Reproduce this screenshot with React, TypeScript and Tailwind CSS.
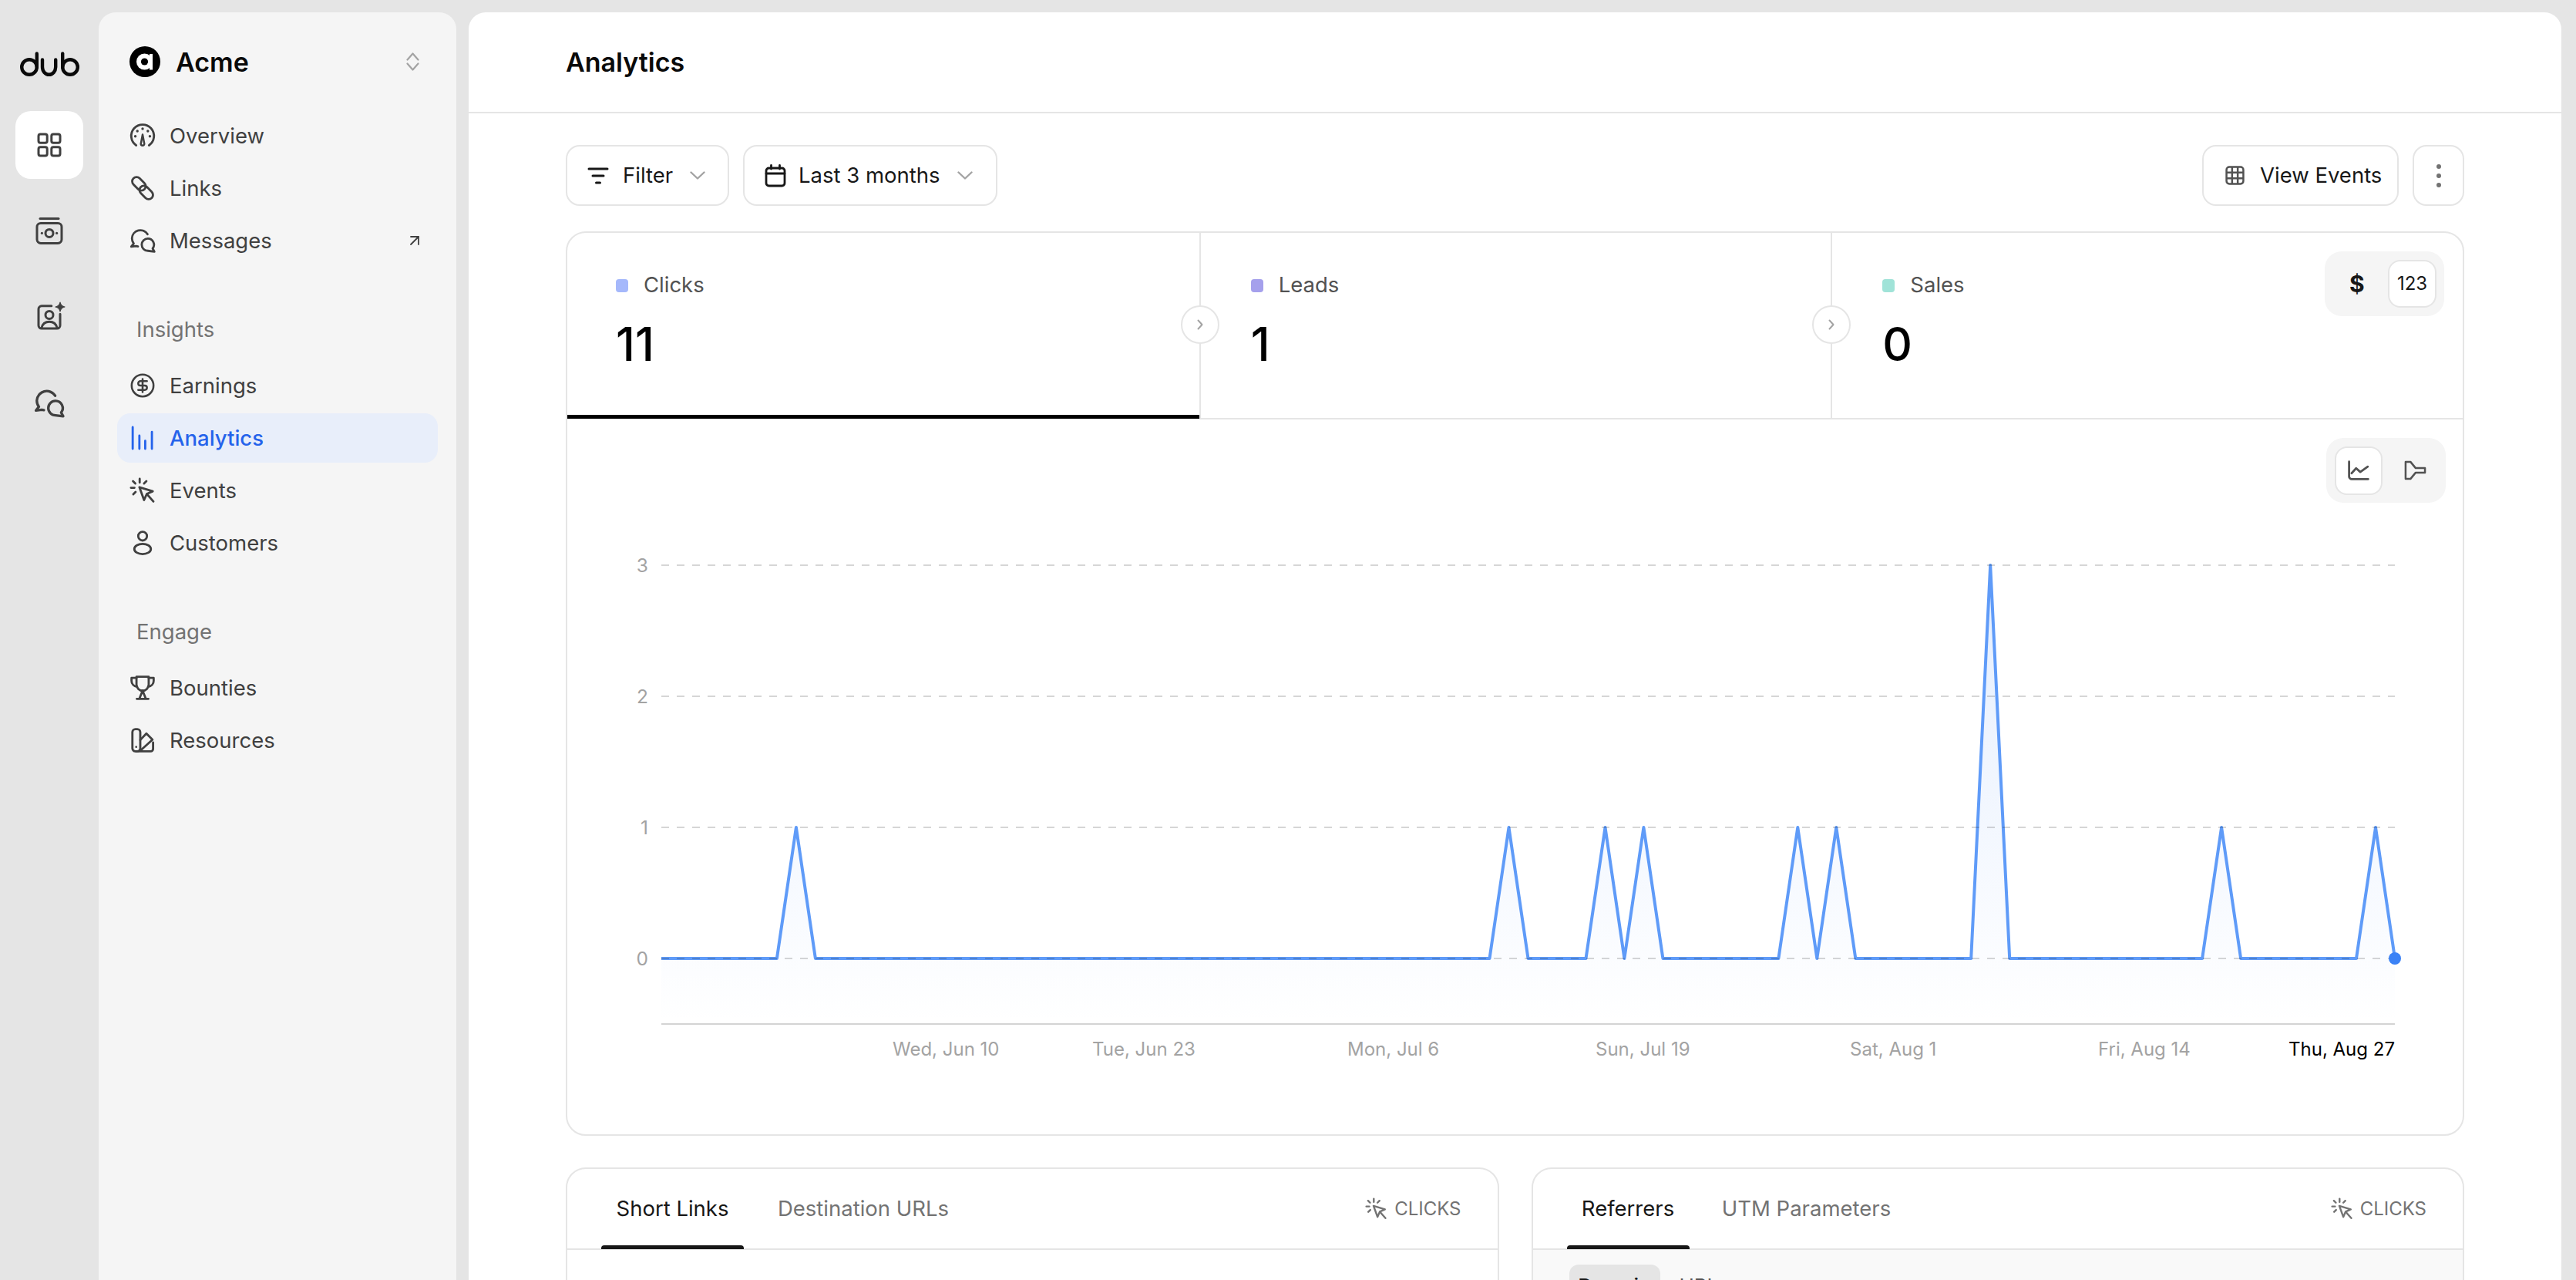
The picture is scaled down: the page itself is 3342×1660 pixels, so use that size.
import React from 'react';
import { ArrowUpRight, CircleDollarSign } from 'lucide-react';

type IconProps = { className?: string };

const NucleoSvg: React.FC<React.PropsWithChildren<{ className?: string }>> = ({ className = 'w-[34px] h-[34px]', children }) => (
  <svg viewBox="0 0 18 18" fill="none" stroke="currentColor" strokeWidth="1.5" strokeLinecap="round" strokeLinejoin="round" className={`shrink-0 overflow-visible ${className}`}>
    {children}
  </svg>
);

const GaugeIcon = ({ className }: IconProps) => (
  <NucleoSvg className={className}>
    <path d="M4.6 15.6A7.8 7.8 0 1 1 13.4 15.6" />
    <path d="M9 8.2 10.2 14.6a1.2 1.2 0 1 1-2.4 0Z" strokeWidth="1.3" />
    <g fill="currentColor" stroke="none">
      <circle cx="4" cy="9.4" r=".9" />
      <circle cx="5.4" cy="5.8" r=".9" />
      <circle cx="9" cy="4.2" r=".9" />
      <circle cx="12.6" cy="5.8" r=".9" />
      <circle cx="14" cy="9.4" r=".9" />
    </g>
  </NucleoSvg>
);

const LinkIcon = ({ className }: IconProps) => (
  <NucleoSvg className={className}>
    <rect x="1.2" y="3" width="10.6" height="6" rx="3" transform="rotate(45 6.5 6)" />
    <rect x="6.2" y="9" width="10.6" height="6" rx="3" transform="rotate(45 11.5 12)" />
  </NucleoSvg>
);

const ChatIcon = ({ className }: IconProps) => (
  <NucleoSvg className={className}>
    <path d="M12.4 4.6A5.8 5.8 0 0 0 1.7 7.4c0 1.4.4 2.6 1.2 3.6L1.2 13.2l3.4-.4 1.2.2" />
    <path d="M12.6 7.6a4.2 4.2 0 1 0 0 8.4l4.5.6-1.2-2.2a4.2 4.2 0 0 0-3.3-6.8Z" />
  </NucleoSvg>
);

const BarsIcon = ({ className }: IconProps) => (
  <NucleoSvg className={className}>
    <path d="M2.2 1.6V16.4M6.8 7.4V16.4M10.8 11V16.4M15.4 4.8V16.4" />
  </NucleoSvg>
);

const CursorIcon = ({ className }: IconProps) => (
  <NucleoSvg className={className}>
    <path d="M7 1V3.6M11.6 2.6 10 4.2M2.4 2.6 4 4.2M1 7.2H3.4M2.6 11.6 4.2 10" />
    <path d="M6.8 6.8 16 9.6 11.9 11.4 10 15.6Z" />
    <path d="M12 11.6 16.4 16.6" />
  </NucleoSvg>
);

const PersonIcon = ({ className }: IconProps) => (
  <NucleoSvg className={className}>
    <circle cx="9" cy="4.4" r="3" />
    <ellipse cx="9" cy="13.2" rx="5.7" ry="3.5" />
  </NucleoSvg>
);

const TrophyIcon = ({ className }: IconProps) => (
  <NucleoSvg className={className}>
    <path d="M4.8 1.4H13.2V6.8a4.2 4.2 0 0 1-8.4 0Z" />
    <path d="M4.8 2.2H1.4V4.2C1.4 6.4 3 8 5.2 8.2M13.2 2.2H16.6V4.2C16.6 6.4 15 8 12.8 8.2" />
    <path d="M9 11 6.8 16.4M9 11 11.2 16.4M5 16.6H13" />
  </NucleoSvg>
);

const SwatchIcon = ({ className }: IconProps) => (
  <NucleoSvg className={className}>
    <rect x="2" y="1.4" width="5.4" height="15.2" rx="2" />
    <path d="M7.4 8.8 11.6 4.4 15.8 8.6 8 15.6" />
    <path d="M4.4 16.6H14.6A1.6 1.6 0 0 0 16.2 15V10.6" />
    <circle cx="4.6" cy="13.6" r=".7" fill="currentColor" stroke="none" />
  </NucleoSvg>
);

const GridIcon = ({ className }: IconProps) => (
  <NucleoSvg className={className}>
    <rect x="2" y="2" width="5.6" height="5.6" rx="1.2" />
    <rect x="10.4" y="2" width="5.6" height="5.6" rx="1.2" />
    <rect x="2" y="10.4" width="5.6" height="5.6" rx="1.2" />
    <rect x="10.4" y="10.4" width="5.6" height="5.6" rx="1.2" />
  </NucleoSvg>
);

const MoneyIcon = ({ className }: IconProps) => (
  <NucleoSvg className={className}>
    <path d="M3 1.2H15" />
    <rect x="1" y="4.2" width="16" height="13" rx="2.4" />
    <circle cx="9" cy="10.7" r="2.5" />
    <circle cx="4.2" cy="10.7" r=".8" fill="currentColor" stroke="none" />
    <circle cx="13.8" cy="10.7" r=".8" fill="currentColor" stroke="none" />
  </NucleoSvg>
);

const PartnerIcon = ({ className }: IconProps) => (
  <NucleoSvg className={className}>
    <path d="M10.4 2.4H4A2 2 0 0 0 2 4.4V15A2 2 0 0 0 4 17H14A2 2 0 0 0 16 15V7.6" />
    <circle cx="9" cy="8.2" r="2.5" />
    <path d="M4 16.6C4.6 13.8 6.6 12.6 9 12.6S13.4 13.8 14 16.6" />
    <path d="M16 0Q16.5 2.5 19 3 16.5 3.5 16 6 15.5 3.5 13 3 15.5 2.5 16 0Z" fill="currentColor" strokeWidth=".6" />
  </NucleoSvg>
);

const ChevronDown = () => (
  <svg viewBox="0 0 20 11" fill="none" stroke="#a3a3a3" strokeWidth="2.4" strokeLinecap="round" strokeLinejoin="round" className="w-[20px] h-[11px] shrink-0">
    <path d="M1.5 1.5 10 9.5 18.5 1.5" />
  </svg>
);

const ChevronRightSmall = () => (
  <svg viewBox="0 0 8 14" fill="none" stroke="#a3a3a3" strokeWidth="2" strokeLinecap="round" strokeLinejoin="round" className="w-[8px] h-[14px]">
    <path d="M1.5 1.5 6.5 7 1.5 12.5" />
  </svg>
);

const DubLogo = () => (
  <svg viewBox="0 0 77 32" fill="none" stroke="#0a0a0a" strokeWidth="4.4" strokeLinecap="round" className="w-[77px] h-[32px]">
    <circle cx="12" cy="20" r="9.8" />
    <path d="M21.8 2.4V20" />
    <path d="M29 10.4V20a8.6 9.8 0 0 0 17.2 0V10.4" />
    <circle cx="65" cy="20" r="9.8" />
    <path d="M55.2 2.4V20" />
  </svg>
);

const AcmeLogo = () => (
  <svg viewBox="0 0 40 40" className="w-[40px] h-[40px] shrink-0">
    <circle cx="20" cy="20" r="20" fill="#000" />
    <circle cx="19.5" cy="20" r="10.5" fill="#fff" />
    <rect x="26" y="10" width="4" height="20.5" fill="#fff" />
    <circle cx="19.5" cy="20" r="4.6" fill="#000" />
  </svg>
);

type NavItem = { label: string; icon: React.FC<IconProps>; active?: boolean; external?: boolean };

const NAV_TOP: NavItem[] = [
  { label: 'Overview', icon: GaugeIcon },
  { label: 'Links', icon: LinkIcon },
  { label: 'Messages', icon: ChatIcon, external: true },
];

const NAV_INSIGHTS: NavItem[] = [
  { label: 'Earnings', icon: ({ className }) => <CircleDollarSign strokeWidth={1.8} className={className} /> },
  { label: 'Analytics', icon: BarsIcon, active: true },
  { label: 'Events', icon: CursorIcon },
  { label: 'Customers', icon: PersonIcon },
];

const NAV_ENGAGE: NavItem[] = [
  { label: 'Bounties', icon: TrophyIcon },
  { label: 'Resources', icon: SwatchIcon },
];

const NavRow = ({ item }: { item: NavItem }) => {
  const Icon = item.icon;
  return (
    <div className={`flex h-[64px] items-center gap-[18px] rounded-[17px] pl-[16px] pr-[18px] ${item.active ? 'bg-[#e8eefa] text-[#2563eb]' : 'text-[#404040]'}`}>
      <Icon className="h-[34px] w-[34px] shrink-0" />
      <span className={`flex-1 text-[27.5px] leading-[36px] ${item.active ? 'font-medium' : ''}`}>{item.label}</span>
      {item.external && <ArrowUpRight strokeWidth={1.8} className="h-[24px] w-[24px] text-[#404040]" />}
    </div>
  );
};

const SectionLabel = ({ children }: { children: React.ReactNode }) => (
  <div className="mb-[16px] mt-[60px] flex h-[48px] items-center pl-[25px] text-[27.5px] text-[#737373]">{children}</div>
);

const zeroY = 1243;
const stepY = 170;
const startX = 858;
const stepX = 2249 / 90;
const spikes: Record<number, number> = { 7: 1, 44: 1, 49: 1, 51: 1, 59: 1, 61: 1, 69: 3, 81: 1, 89: 1 };
const points = Array.from({ length: 91 }, (_, i) => `${(startX + i * stepX).toFixed(1)} ${zeroY - (spikes[i] || 0) * stepY}`);
const linePath = `M${points.join(' L')}`;
const areaPath = `${linePath} L3107 1328 L858 1328 Z`;

const xLabels = [
  { text: 'Wed, Jun 10', x: 1158 },
  { text: 'Tue, Jun 23', x: 1417 },
  { text: 'Mon, Jul 6', x: 1748 },
  { text: 'Sun, Jul 19', x: 2070 },
  { text: 'Sat, Aug 1', x: 2400 },
  { text: 'Fri, Aug 14', x: 2722 },
];

const Chart = () => (
  <svg viewBox="736 652 2459 819" className="block h-[819px] w-full">
    <defs>
      <linearGradient id="area" x1="0" y1="733" x2="0" y2="1328" gradientUnits="userSpaceOnUse">
        <stop offset="0" stopColor="#3b82f6" stopOpacity="0.14" />
        <stop offset="1" stopColor="#3b82f6" stopOpacity="0" />
      </linearGradient>
    </defs>
    <path d={areaPath} fill="url(#area)" />
    <path d={linePath} fill="none" stroke="#5f9bf8" strokeWidth="4" strokeLinejoin="round" />
    {[3, 2, 1, 0].map((v) => (
      <g key={v}>
        <line x1="858" x2="3107" y1={zeroY - v * stepY} y2={zeroY - v * stepY} stroke="#000" strokeOpacity="0.16" strokeWidth="2" strokeDasharray="10 10" />
        <text x="841" y={zeroY - v * stepY + 9} textAnchor="end" fontSize="24.5" fill="#a3a3a3">{v}</text>
      </g>
    ))}
    <line x1="858" x2="3107" y1="1328" y2="1328" stroke="#d4d4d4" strokeWidth="2" />
    <circle cx="3107" cy="1243" r="8" fill="#3b82f6" />
    {xLabels.map((l) => (
      <text key={l.text} x={l.x} y="1369" fontSize="24" fill="#a3a3a3">{l.text}</text>
    ))}
    <text x="3107" y="1369" textAnchor="end" fontSize="24" fill="#000">Thu, Aug 27</text>
  </svg>
);

const stats = [
  { label: 'Clicks', value: '11', dot: 'bg-[#a5b8fb]', pad: 'pl-[63px]', active: true, arrow: false },
  { label: 'Leads', value: '1', dot: 'bg-[#a5a0ec]', pad: 'pl-[65px] border-l-2 border-[#e5e5e5]', active: false, arrow: true },
  { label: 'Sales', value: '0', dot: 'bg-[#a0e3d8]', pad: 'pl-[65px] border-l-2 border-[#e5e5e5]', active: false, arrow: true },
];

const Btn = ({ className, children }: { className: string; children: React.ReactNode }) => (
  <div className={`flex h-[79px] items-center rounded-[18px] border-2 border-[#e5e5e5] bg-white text-[27.5px] text-[#171717] ${className}`}>{children}</div>
);

const ClicksLabel = () => (
  <div className="flex items-center gap-[9px] text-[#737373]">
    <CursorIcon className="h-[29px] w-[29px]" />
    <span className="text-[24px]">CLICKS</span>
  </div>
);

const Tab = ({ label, active, className }: { label: string; active?: boolean; className: string }) => (
  <div className={`relative flex h-[105px] items-center justify-center text-[27.5px] ${className} ${active ? 'text-[#171717]' : 'text-[#737373]'}`}>
    {label}
    {active && <div className="absolute bottom-0 left-0 right-0 h-[5px] rounded-t-[4px] bg-[#171717]" />}
  </div>
);

export default function App() {
  return (
    <div className="flex h-[1660px] w-[3342px] overflow-hidden bg-[#e5e5e5] font-[Inter,sans-serif]">
      {/* icon rail */}
      <div className="flex w-[128px] shrink-0 flex-col items-center pt-[67px]">
        <DubLogo />
        <div className="mt-[45px] flex flex-col gap-[23px] text-[#404040]">
          <div className="flex h-[88px] w-[88px] items-center justify-center rounded-[20px] bg-white"><GridIcon className="h-[36px] w-[36px]" /></div>
          <div className="flex h-[88px] w-[88px] items-center justify-center"><MoneyIcon className="h-[36px] w-[36px]" /></div>
          <div className="flex h-[88px] w-[88px] items-center justify-center"><PartnerIcon className="h-[36px] w-[36px]" /></div>
          <div className="flex h-[88px] w-[88px] items-center justify-center pt-[4px]"><ChatIcon className="h-[40px] w-[40px]" /></div>
        </div>
      </div>

      {/* sidebar */}
      <div className="mt-[16px] w-[464px] shrink-0 rounded-t-[22px] bg-[#f5f5f5] px-[24px] pt-[32px]">
        <div className="flex h-[64px] items-center pl-[16px] pr-[24px]">
          <AcmeLogo />
          <span className="ml-[20px] flex-1 text-[34px] font-semibold text-[#0a0a0a]">Acme</span>
          <svg viewBox="0 0 17 24" fill="none" stroke="#a3a3a3" strokeWidth="2.2" strokeLinecap="round" strokeLinejoin="round" className="h-[24px] w-[17px]">
            <path d="M1.5 9.5 8.5 1.5 15.5 9.5M1.5 14.5 8.5 22.5 15.5 14.5" />
          </svg>
        </div>
        <div className="mt-[32px] flex flex-col gap-[4px]">
          {NAV_TOP.map((i) => <NavRow key={i.label} item={i} />)}
        </div>
        <SectionLabel>Insights</SectionLabel>
        <div className="flex flex-col gap-[4px]">
          {NAV_INSIGHTS.map((i) => <NavRow key={i.label} item={i} />)}
        </div>
        <SectionLabel>Engage</SectionLabel>
        <div className="flex flex-col gap-[4px]">
          {NAV_ENGAGE.map((i) => <NavRow key={i.label} item={i} />)}
        </div>
      </div>

      {/* main */}
      <div className="ml-[16px] mt-[16px] w-[2715px] shrink-0 overflow-hidden rounded-t-[22px] bg-white">
        <div className="flex h-[131px] items-center border-b-2 border-[#e5e5e5] pl-[126px] text-[34px] font-semibold text-[#0a0a0a]">
          Analytics
        </div>
        <div className="pl-[126px] pr-[126px] pt-[41px]">
          <div className="flex items-center gap-[18px]">
            <Btn className="w-[212px] pl-[26px]">
              <svg viewBox="0 0 28 24" fill="none" stroke="#171717" strokeWidth="3" strokeLinecap="round" className="mr-[18px] h-[24px] w-[28px] shrink-0">
                <path d="M2 3H26M7 12H21M11.5 21H16.5" />
              </svg>
              <span>Filter</span>
              <span className="ml-[22px]"><ChevronDown /></span>
            </Btn>
            <Btn className="w-[330px] pl-[26px]">
              <svg viewBox="0 0 28 30" fill="none" stroke="#171717" strokeWidth="2.8" strokeLinecap="round" className="mr-[16px] h-[30px] w-[28px] shrink-0">
                <rect x="2" y="5" width="24" height="23" rx="3.5" />
                <path d="M2 12H26M8.5 1.5V6M19.5 1.5V6" />
              </svg>
              <span>Last 3 months</span>
              <span className="ml-[22px]"><ChevronDown /></span>
            </Btn>
            <div className="flex-1" />
            <Btn className="w-[255px] pl-[28px]">
              <svg viewBox="0 0 24 24" fill="none" stroke="#525252" strokeWidth="2.4" className="mr-[20px] h-[25px] w-[25px] shrink-0">
                <rect x="1.5" y="1.5" width="21" height="21" rx="3.5" />
                <path d="M1.5 8.5H22.5M1.5 15.5H22.5M8.5 1.5V22.5M15.5 1.5V22.5" />
              </svg>
              <span>View Events</span>
            </Btn>
            <Btn className="w-[67px] justify-center">
              <svg viewBox="0 0 8 32" fill="#737373" className="h-[32px] w-[8px]">
                <circle cx="4" cy="4" r="3" />
                <circle cx="4" cy="16" r="3" />
                <circle cx="4" cy="28" r="3" />
              </svg>
            </Btn>
          </div>

          {/* chart card */}
          <div className="relative mt-[33px] overflow-hidden rounded-[26px] border-2 border-[#e5e5e5]">
            <div className="grid h-[242px] grid-cols-3 border-b-2 border-[#e5e5e5]">
              {stats.map((s) => (
                <div key={s.label} className={`relative pt-[50px] ${s.pad}`}>
                  <div className="flex h-[36px] items-center gap-[20px] text-[27.5px] text-[#525252]">
                    <span className={`h-[17px] w-[16px] rounded-[4px] ${s.dot}`} />
                    {s.label}
                  </div>
                  <div className="mt-[26px] text-[60px] font-medium leading-[64px] text-black">{s.value}</div>
                  {s.active && <div className="absolute -bottom-[1px] left-0 right-0 h-[5px] bg-black" />}
                  {s.arrow && (
                    <div className="absolute -left-[26px] top-[94px] flex h-[50px] w-[50px] items-center justify-center rounded-full border-2 border-[#e5e5e5] bg-white">
                      <ChevronRightSmall />
                    </div>
                  )}
                </div>
              ))}
            </div>
            <div className="absolute right-[24px] top-[24px] flex h-[84px] w-[155px] items-center rounded-[22px] bg-[#f5f5f5] pl-[32px] pr-[10px]">
              <span className="flex-1 text-[30px] font-bold text-[#171717]">$</span>
              <span className="flex h-[62px] w-[63px] items-center justify-center rounded-[16px] border-2 border-[#e5e5e5] bg-white text-[24px] text-[#171717]">123</span>
            </div>
            <div className="flex justify-end pr-[22px] pt-[24px]">
              <div className="flex h-[84px] w-[155px] items-center rounded-[22px] bg-[#f5f5f5] pl-[11px] text-[#525252]">
                <span className="flex h-[63px] w-[62px] items-center justify-center rounded-[16px] border-2 border-[#e5e5e5] bg-white">
                  <svg viewBox="0 0 26 24" fill="none" stroke="currentColor" strokeWidth="2.6" strokeLinecap="round" strokeLinejoin="round" className="h-[26px] w-[28px]">
                    <path d="M1.5 1.5V19.5A3 3 0 0 0 4.5 22.5H24.5" />
                    <path d="M4.5 15.5 10 9.5 15 14 24 7.5" />
                  </svg>
                </span>
                <svg viewBox="0 0 30 26" fill="none" stroke="currentColor" strokeWidth="2.6" strokeLinejoin="round" className="ml-[28px] h-[26px] w-[29px]">
                  <path d="M2 1.5H8.5L15.5 10H28V16H15.5L8.5 24.5H2Z" />
                </svg>
              </div>
            </div>
            <Chart />
          </div>

          {/* bottom cards */}
          <div className="mt-[41px] grid grid-cols-2 gap-[42px]">
            <div className="h-[500px] rounded-[26px] border-2 border-[#e5e5e5]">
              <div className="flex h-[105px] items-center border-b-2 border-[#e5e5e5] pr-[47px]">
                <Tab label="Short Links" active className="ml-[44px] w-[185px]" />
                <Tab label="Destination URLs" className="ml-[35px] w-[240px]" />
                <div className="flex-1" />
                <ClicksLabel />
              </div>
            </div>
            <div className="h-[500px] overflow-hidden rounded-[26px] border-2 border-[#e5e5e5]">
              <div className="flex h-[105px] items-center border-b-2 border-[#e5e5e5] pr-[47px]">
                <Tab label="Referrers" active className="ml-[44px] w-[159px]" />
                <Tab label="UTM Parameters" className="ml-[32px] w-[240px]" />
                <div className="flex-1" />
                <ClicksLabel />
              </div>
              <div className="h-full bg-[#f9f9f9] pl-[47px] pt-[19px]">
                <div className="flex items-center gap-[25px] text-[26px]">
                  <span className="flex h-[54px] w-[118px] items-center justify-center rounded-[12px] bg-[#e5e5e5] font-medium text-[#171717]">Domain</span>
                  <span className="text-[#525252]">URL</span>
                </div>
              </div>
            </div>
          </div>
        </div>
      </div>
    </div>
  );
}
